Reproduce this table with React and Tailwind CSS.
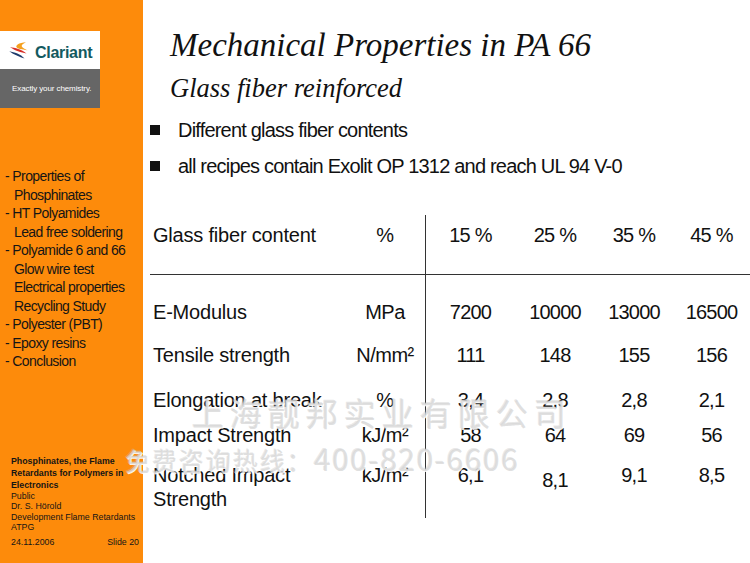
import React from "react";

const sans = { fontFamily: '"Liberation Sans", Arial, sans-serif' };
const serif = { fontFamily: '"Liberation Serif", "Times New Roman", serif' };
const cjk = { fontFamily: '"Noto Sans CJK SC", "Liberation Sans", sans-serif' };

const nav = [
  ["- Properties of", false],
  ["Phosphinates", true],
  ["- HT Polyamides", false],
  ["Lead free soldering", true],
  ["- Polyamide 6 and 66", false],
  ["Glow wire test", true],
  ["Electrical properties", true],
  ["Recycling Study", true],
  ["- Polyester (PBT)", false],
  ["- Epoxy resins", false],
  ["- Conclusion", false],
];

function Logo() {
  return (
    <div className="w-[100px]">
      <div className="h-[38px] bg-white flex items-center pl-[9px] gap-[5px]">
        <svg width="21" height="17" viewBox="0 0 21 17">
          <path d="M17 0.3 C10 0.8 5.5 3.5 8 5.8 C10 7.5 15 7.2 20 9 C14.5 6 8.5 4.5 17 0.3Z" fill="#f5a01e" />
          <path d="M1 5 C6 6 12.5 7.2 17.5 11.5 C12 10.2 6 9 1 5Z" fill="#d62f28" />
          <path d="M0.3 9.2 C5.5 10.2 11.5 11.8 15.5 16.5 C10.5 14.8 5 12.8 0.3 9.2Z" fill="#1d3a6b" />
        </svg>
        <span className="text-[16px] font-bold tracking-[-0.3px] text-[#135a60] leading-none mt-[5px]" style={sans}>
          Clariant
        </span>
      </div>
      <div className="h-[39px] bg-[#666666] flex items-center pl-[12px]">
        <span className="text-[8px] tracking-[-0.1px] text-white leading-none" style={sans}>
          Exactly your chemistry.
        </span>
      </div>
    </div>
  );
}

function Sidebar() {
  return (
    <div className="w-[143px] shrink-0 bg-[#fd8b0b] flex flex-col pt-[31px] text-[#151515]" style={sans}>
      <Logo />
      <div className="mt-[59px] text-[14px] leading-[18.5px] tracking-[-0.6px]">
        {nav.map(([t, ind], i) => (
          <div key={i} className={ind ? "pl-[14px]" : "pl-[5px]"}>
            {t}
          </div>
        ))}
      </div>
      <div className="mt-[84px] pl-[11px] pr-[4px] text-[8.8px]">
        <div className="font-bold leading-[12px]">
          <div>Phosphinates, the Flame</div>
          <div>Retardants for Polymers in</div>
          <div>Electronics</div>
        </div>
        <div className="leading-[10.5px]">
          <div>Public</div>
          <div>Dr. S. Hörold</div>
          <div>Development Flame Retardants</div>
          <div>ATPG</div>
        </div>
        <div className="mt-[4px] flex justify-between leading-[10.5px]">
          <span>24.11.2006</span>
          <span>Slide 20</span>
        </div>
      </div>
    </div>
  );
}

const valW = ["w-[89px]", "w-[80px]", "w-[78px]", "w-[77px]"];

function Row({ label, label2, unit, values, h, pt, border, shift }) {
  return (
    <div className="flex" style={{ height: h }}>
      <div className={"flex w-[275px] " + (border ? "border-b border-[#333]" : "")} style={{ paddingTop: pt }}>
        <div className="w-[195px] pl-[3px] tracking-[-0.2px]">
          <div>{label}</div>
          {label2 && <div>{label2}</div>}
        </div>
        <div className="w-[80px] text-center tracking-[-0.5px]">{unit}</div>
      </div>
      <div className={"flex flex-1 border-l border-[#333] " + (border ? "border-b" : "")} style={{ paddingTop: pt }}>
        {values.map((v, i) => (
          <div
            key={i}
            className={valW[i] + " text-center tracking-[-0.8px]"}
            style={shift && shift[i] ? { paddingTop: shift[i] } : undefined}
          >
            {v}
          </div>
        ))}
      </div>
    </div>
  );
}

function Main() {
  return (
    <div className="flex-1 flex flex-col bg-white text-[#111]">
      <div className="pl-[27px] pt-[27px]" style={serif}>
        <div className="italic text-[33px] leading-[37px]">Mechanical Properties in PA 66</div>
        <div className="italic text-[26.5px] leading-[30px] mt-[9px]">Glass fiber reinforced</div>
      </div>
      <div className="pl-[7px] mt-[15px] flex flex-col gap-[12px] text-[20px] leading-[24px] tracking-[-0.8px]" style={sans}>
        <div className="flex items-center">
          <span className="w-[10px] h-[10px] bg-[#111] mr-[18px] shrink-0" />
          <span>Different glass fiber contents</span>
        </div>
        <div className="flex items-center">
          <span className="w-[10px] h-[10px] bg-[#111] mr-[18px] shrink-0" />
          <span>all recipes contain Exolit OP 1312 and reach UL 94 V-0</span>
        </div>
      </div>
      <div className="mt-[37px] ml-[7px] flex flex-col text-[20px] leading-[24px]" style={sans}>
        <Row label="Glass fiber content" unit="%" values={["15 %", "25 %", "35 %", "45 %"]} h={60} pt={8} border />
        <Row label="E-Modulus" unit="MPa" values={["7200", "10000", "13000", "16500"]} h={58} pt={25} />
        <Row label="Tensile strength" unit="N/mm²" values={["111", "148", "155", "156"]} h={45} pt={10} />
        <Row label="Elongation at break" unit="%" values={["3,4", "2,8", "2,8", "2,1"]} h={40} pt={10} />
        <Row label="Impact Strength" unit="kJ/m²" values={["58", "64", "69", "56"]} h={37} pt={5} />
        <Row label="Notched Impact" label2="Strength" unit="kJ/m²" values={["6,1", "8,1", "9,1", "8,5"]} h={63} pt={8} shift={[0, 5, 0, 0]} />
      </div>
    </div>
  );
}

const wm = {
  ...cjk,
  color: "rgba(214,214,214,0.75)",
  textShadow: "1px 1px 0 rgba(255,255,255,0.9), -1px -1px 0 rgba(190,190,190,0.35)",
};

export default function App() {
  return (
    <div className="relative w-[750px] h-[563px] flex overflow-hidden bg-white">
      <Sidebar />
      <Main />
      <div
        className="absolute left-[192px] top-[396px] text-[32px] leading-none tracking-[6px] whitespace-nowrap pointer-events-none"
        style={wm}
      >
        上海靓邦实业有限公司
      </div>
      <div
        className="absolute left-[125px] top-[443px] flex items-baseline leading-none whitespace-nowrap pointer-events-none"
        style={wm}
      >
        <span className="text-[25px] tracking-[2px]">免费咨询热线：</span>
        <span className="text-[30px] tracking-[1.5px]">400-820-6606</span>
      </div>
    </div>
  );
}
